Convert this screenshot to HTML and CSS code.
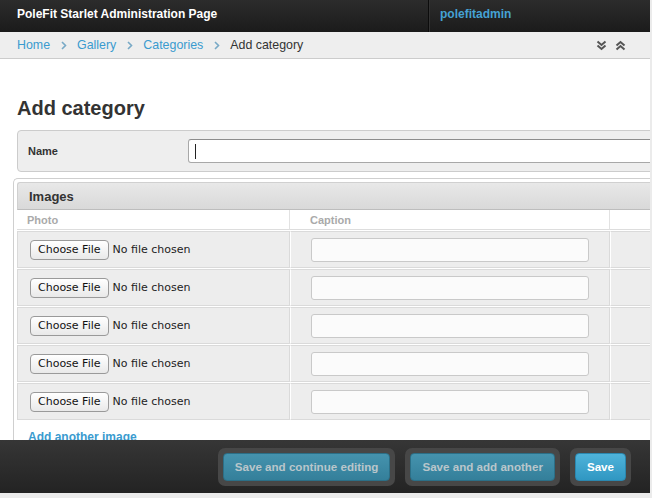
FILE: index.html
```html
<!DOCTYPE html>
<html>
<head>
<meta charset="utf-8">
<link rel="stylesheet" href="styles.css">
</head>
<body>
<div class="frame">
  <header class="topbar">
    <div class="brand">PoleFit Starlet Administration Page</div>
    <div class="user">polefitadmin</div>
  </header>
  <nav class="crumbs">
    <a href="#">Home</a>
    <svg class="sep" width="6" height="9" viewBox="0 0 6 9"><polyline points="1,1 4.5,4.5 1,8" fill="none" stroke="#78a9c6" stroke-width="1.6"/></svg>
    <a href="#">Gallery</a>
    <svg class="sep" width="6" height="9" viewBox="0 0 6 9"><polyline points="1,1 4.5,4.5 1,8" fill="none" stroke="#78a9c6" stroke-width="1.6"/></svg>
    <a href="#">Categories</a>
    <svg class="sep" width="6" height="9" viewBox="0 0 6 9"><polyline points="1,1 4.5,4.5 1,8" fill="none" stroke="#78a9c6" stroke-width="1.6"/></svg>
    <span class="current">Add category</span>
    <span class="toggles">
      <svg width="11" height="11" viewBox="0 0 11 11"><polyline points="1.5,1.5 5.5,5 9.5,1.5" fill="none" stroke="#555" stroke-width="2"/><polyline points="1.5,5.5 5.5,9 9.5,5.5" fill="none" stroke="#555" stroke-width="2"/></svg>
      <svg width="11" height="11" viewBox="0 0 11 11"><polyline points="1.5,5.5 5.5,2 9.5,5.5" fill="none" stroke="#555" stroke-width="2"/><polyline points="1.5,9.5 5.5,6 9.5,9.5" fill="none" stroke="#555" stroke-width="2"/></svg>
    </span>
  </nav>
  <main class="content">
    <h1>Add category</h1>
    <div class="module">
      <label class="field-label">Name</label>
      <div class="text-input"><span class="caret"></span></div>
    </div>
    <div class="inline-group">
      <h2>Images</h2>
      <table class="tabular">
        <colgroup><col class="w-photo"><col class="w-caption"><col></colgroup>
        <thead>
          <tr><th class="c-photo">Photo</th><th class="c-caption">Caption</th><th class="c-extra"></th></tr>
        </thead>
        <tbody>
          <tr><td class="c-photo"><span class="file-btn">Choose File</span><span class="file-note">No file chosen</span></td><td class="c-caption"><div class="caption-input"></div></td><td class="c-extra"></td></tr>
          <tr><td class="c-photo"><span class="file-btn">Choose File</span><span class="file-note">No file chosen</span></td><td class="c-caption"><div class="caption-input"></div></td><td class="c-extra"></td></tr>
          <tr><td class="c-photo"><span class="file-btn">Choose File</span><span class="file-note">No file chosen</span></td><td class="c-caption"><div class="caption-input"></div></td><td class="c-extra"></td></tr>
          <tr><td class="c-photo"><span class="file-btn">Choose File</span><span class="file-note">No file chosen</span></td><td class="c-caption"><div class="caption-input"></div></td><td class="c-extra"></td></tr>
          <tr><td class="c-photo"><span class="file-btn">Choose File</span><span class="file-note">No file chosen</span></td><td class="c-caption"><div class="caption-input"></div></td><td class="c-extra"></td></tr>
        </tbody>
      </table>
      <a class="add-row" href="#">Add another image</a>
    </div>
  </main>
  <footer class="submit-row">
    <span class="btn-wrap"><span class="btn">Save and continue editing</span></span>
    <span class="btn-wrap"><span class="btn">Save and add another</span></span>
    <span class="btn-wrap"><span class="btn btn-primary">Save</span></span>
  </footer>
</div>
</body>
</html>
```
FILE: styles.css
```css
html, body {
  margin: 0;
  padding: 0;
  background: #ebebeb;
}
body {
  font-family: "Liberation Sans", Arial, sans-serif;
  color: #333;
}
.frame {
  position: relative;
  width: 650px;
  height: 493px;
  overflow: hidden;
  background: #fff;
}
.topbar {
  display: flex;
  height: 32px;
  background: linear-gradient(#2c2c2c, #1b1b1b);
  font-size: 12px;
  font-weight: bold;
  line-height: 29px;
}
.brand {
  width: 411px;
  padding-left: 17px;
  color: #fff;
  border-right: 1px solid #0c0c0c;
}
.user {
  padding-left: 10px;
  color: #45a2d4;
  border-left: 1px solid #333;
}
.crumbs {
  display: flex;
  align-items: center;
  height: 26px;
  padding-left: 17px;
  background: #eeeeee;
  border-bottom: 1px solid #cccccc;
  font-size: 12.4px;
}
.crumbs a {
  color: #3a9bcf;
  text-decoration: none;
}
.crumbs .sep {
  margin: 0 10px 0 11px;
}
.crumbs .current {
  color: #333;
}
.toggles {
  display: flex;
  gap: 8px;
  margin-left: auto;
  margin-right: 24px;
}
.content {
  width: 720px;
}
h1 {
  margin: 37px 0 10px 17px;
  font-size: 20px;
  line-height: 24px;
  color: #333;
}
.module {
  display: flex;
  align-items: center;
  margin-left: 17px;
  padding: 8px 0 8px 10px;
  background: #eeeeee;
  border: 1px solid #cccccc;
  border-radius: 4px;
}
.field-label {
  width: 160px;
  font-size: 11px;
  font-weight: bold;
  color: #333;
}
.text-input {
  flex: 1;
  height: 22px;
  background: #fff;
  border: 1px solid #a8a8a8;
  border-top-color: #8c8c8c;
  border-radius: 3px;
  display: flex;
  align-items: center;
  padding-left: 6px;
}
.caret {
  width: 1px;
  height: 15px;
  background: #222;
}
.inline-group {
  margin: 6px 0 0 13px;
  padding: 3px 0 0 3px;
  border: 1px solid #cfcfcf;
  border-right: 0;
  border-radius: 5px 0 0 0;
}
.inline-group h2 {
  margin: 0;
  height: 28px;
  line-height: 28px;
  padding-left: 11px;
  font-size: 13px;
  background: linear-gradient(#e8e8e8, #d9d9d9);
  border: 1px solid #d0d0d0;
  border-bottom-color: #bdbdbd;
  border-right: 0;
  border-radius: 3px 0 0 0;
  color: #333;
  box-sizing: border-box;
}
.tabular {
  table-layout: fixed;
  border-collapse: separate;
  border-spacing: 0 1px;
  width: 100%;
  margin-top: -1px;
}
.w-photo {
  width: 273px;
}
.w-caption {
  width: 320px;
}
.tabular th {
  height: 20px;
  box-sizing: border-box;
  text-align: left;
  font-size: 11px;
  font-weight: bold;
  color: #aaaaaa;
  padding: 0 0 0 10px;
  border-bottom: 1px solid #dddddd;
  border-right: 1px solid #e2e2e2;
  background: #fff;
}
.tabular td {
  height: 37px;
  padding: 0 0 0 12px;
  background: #ededed;
  border: 1px solid #dadada;
  border-left-width: 0;
  box-sizing: border-box;
  vertical-align: middle;
}
.tabular td.c-photo {
  border-left-width: 1px;
}
.tabular th.c-caption {
  padding-left: 20px;
}
.tabular td.c-caption {
  padding-left: 20px;
  border-left: 1px solid #fff;
}
.tabular td.c-extra {
  border-left: 1px solid #fff;
}
.tabular th.c-extra {
  border-right: 0;
}
.file-btn {
  display: inline-block;
  box-sizing: border-box;
  height: 20px;
  line-height: 18px;
  padding: 0 7px;
  font-family: "DejaVu Sans", sans-serif;
  font-size: 11px;
  color: #111;
  background: linear-gradient(#ffffff, #e9e9e9);
  border: 1px solid #9a9a9a;
  border-radius: 4px;
  vertical-align: middle;
}
.file-note {
  margin-left: 4px;
  font-family: "DejaVu Sans", sans-serif;
  font-size: 11px;
  color: #222;
  vertical-align: middle;
}
.caption-input {
  width: 276px;
  height: 22px;
  background: #fbfbfb;
  border: 1px solid #c9c9c9;
  border-radius: 3px;
}
.add-row {
  display: block;
  margin: 8px 0 0 11px;
  font-size: 12px;
  font-weight: bold;
  color: #3a9bcf;
  text-decoration: none;
  line-height: 16px;
}
.submit-row {
  position: absolute;
  left: 0;
  right: 0;
  bottom: 0;
  height: 53px;
  display: flex;
  align-items: center;
  justify-content: flex-end;
  gap: 10px;
  padding-right: 19px;
  background: linear-gradient(#363636, #232323);
}
.btn-wrap {
  display: inline-block;
  padding: 5px;
  background: #474747;
  border-radius: 7px;
}
.btn {
  display: block;
  box-sizing: border-box;
  height: 28px;
  line-height: 26px;
  padding: 0 11px;
  font-size: 11.6px;
  font-weight: bold;
  color: #b9c6cb;
  background: linear-gradient(#4593ae, #347f9a);
  border: 1px solid #2c6f87;
  border-radius: 4px;
}
.btn-primary {
  color: #fff;
  background: linear-gradient(#4fb3da, #3097c2);
  border-color: #2b88b0;
}
```
